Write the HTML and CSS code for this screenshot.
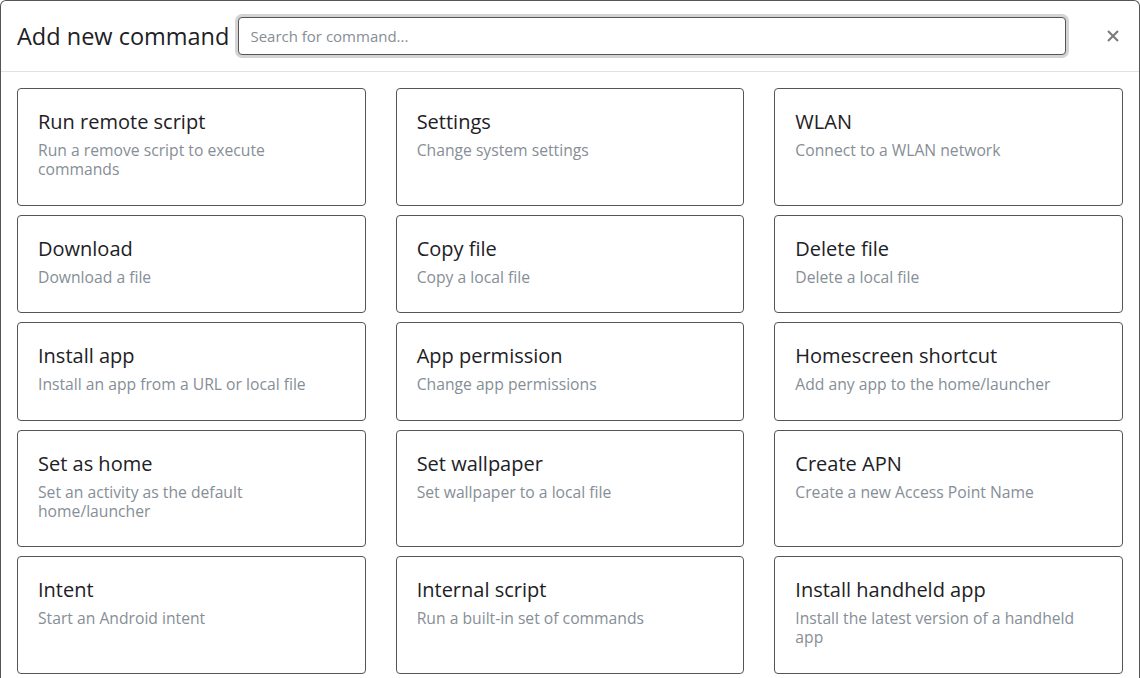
FILE: index.html
```html
<!DOCTYPE html>
<html lang="en">
<head>
<meta charset="utf-8">
<title>Add new command</title>
<link rel="stylesheet" href="styles.css">
</head>
<body>
<div class="modal">
  <div class="modal-header">
    <h4 class="modal-title">Add new command</h4>
    <input class="search" type="text" placeholder="Search for command...">
    <button class="close" type="button" aria-label="Close">
      <svg width="12" height="12" viewBox="0 0 12 12"><path d="M1 1L11 11M11 1L1 11" stroke="#7a7a7a" stroke-width="2" fill="none"/></svg>
    </button>
  </div>
  <div class="modal-body">
    <div class="grid">
      <div class="card"><h5 class="card-title">Run remote script</h5><p class="card-text">Run a remove script to execute commands</p></div>
      <div class="card"><h5 class="card-title">Settings</h5><p class="card-text">Change system settings</p></div>
      <div class="card"><h5 class="card-title">WLAN</h5><p class="card-text">Connect to a WLAN network</p></div>
      <div class="card"><h5 class="card-title">Download</h5><p class="card-text">Download a file</p></div>
      <div class="card"><h5 class="card-title">Copy file</h5><p class="card-text">Copy a local file</p></div>
      <div class="card"><h5 class="card-title">Delete file</h5><p class="card-text">Delete a local file</p></div>
      <div class="card"><h5 class="card-title">Install app</h5><p class="card-text">Install an app from a URL or local file</p></div>
      <div class="card"><h5 class="card-title">App permission</h5><p class="card-text">Change app permissions</p></div>
      <div class="card"><h5 class="card-title">Homescreen shortcut</h5><p class="card-text">Add any app to the home/launcher</p></div>
      <div class="card"><h5 class="card-title">Set as home</h5><p class="card-text">Set an activity as the default home/launcher</p></div>
      <div class="card"><h5 class="card-title">Set wallpaper</h5><p class="card-text">Set wallpaper to a local file</p></div>
      <div class="card"><h5 class="card-title">Create APN</h5><p class="card-text">Create a new Access Point Name</p></div>
      <div class="card"><h5 class="card-title">Intent</h5><p class="card-text">Start an Android intent</p></div>
      <div class="card"><h5 class="card-title">Internal script</h5><p class="card-text">Run a built-in set of commands</p></div>
      <div class="card"><h5 class="card-title">Install handheld app</h5><p class="card-text">Install the latest version of a handheld app</p></div>
    </div>
  </div>
</div>
</body>
</html>
```
FILE: styles.css
```css
* { box-sizing: border-box; }
html, body {
  margin: 0;
  padding: 0;
  background: #fff;
  height: 100%;
  overflow: hidden;
}
body {
  font-family: "Open Sans", "Noto Sans", "Liberation Sans", sans-serif;
  color: #212529;
}
.modal {
  width: 1140px;
  min-height: 700px;
  border: 1px solid #555;
  border-bottom: none;
  border-radius: 6px 6px 0 0;
  background: #fff;
}
.modal-header {
  display: flex;
  align-items: center;
  height: 71px;
  padding: 16px;
  border-bottom: 1px solid #dee2e6;
}
.modal-title {
  margin: 0 9px 0 0;
  font-size: 23.5px;
  font-weight: 400;
  line-height: 1.2;
  white-space: nowrap;
  color: #1d2125;
}
.search {
  flex: 1;
  height: 38px;
  padding: 6px 11px;
  font-family: inherit;
  font-size: 15px;
  color: #495057;
  border: 1px solid #555;
  border-radius: 4px;
  box-shadow: 0 0 0 3px #d4d4d4;
  outline: none;
}
.search::placeholder { color: #868e96; }
.close {
  display: flex;
  align-items: center;
  justify-content: center;
  width: 20px;
  height: 20px;
  margin-left: 37px;
  padding: 0;
  border: none;
  background: none;
  cursor: pointer;
}
.modal-body {
  padding: 16px;
}
.grid {
  display: grid;
  grid-template-columns: repeat(3, 1fr);
  column-gap: 30px;
  row-gap: 9px;
}
.card {
  border: 1px solid #555;
  border-radius: 4px;
  padding: 21px 20px 19px 20px;
  min-width: 0;
}
.card-title {
  margin: 0 0 7px 0;
  font-size: 20px;
  font-weight: 400;
  line-height: 24px;
  color: #1d2125;
}
.card-text {
  margin: 0 0 6.5px 0;
  font-size: 15.7px;
  line-height: 19px;
  color: #868e96;
}
```
